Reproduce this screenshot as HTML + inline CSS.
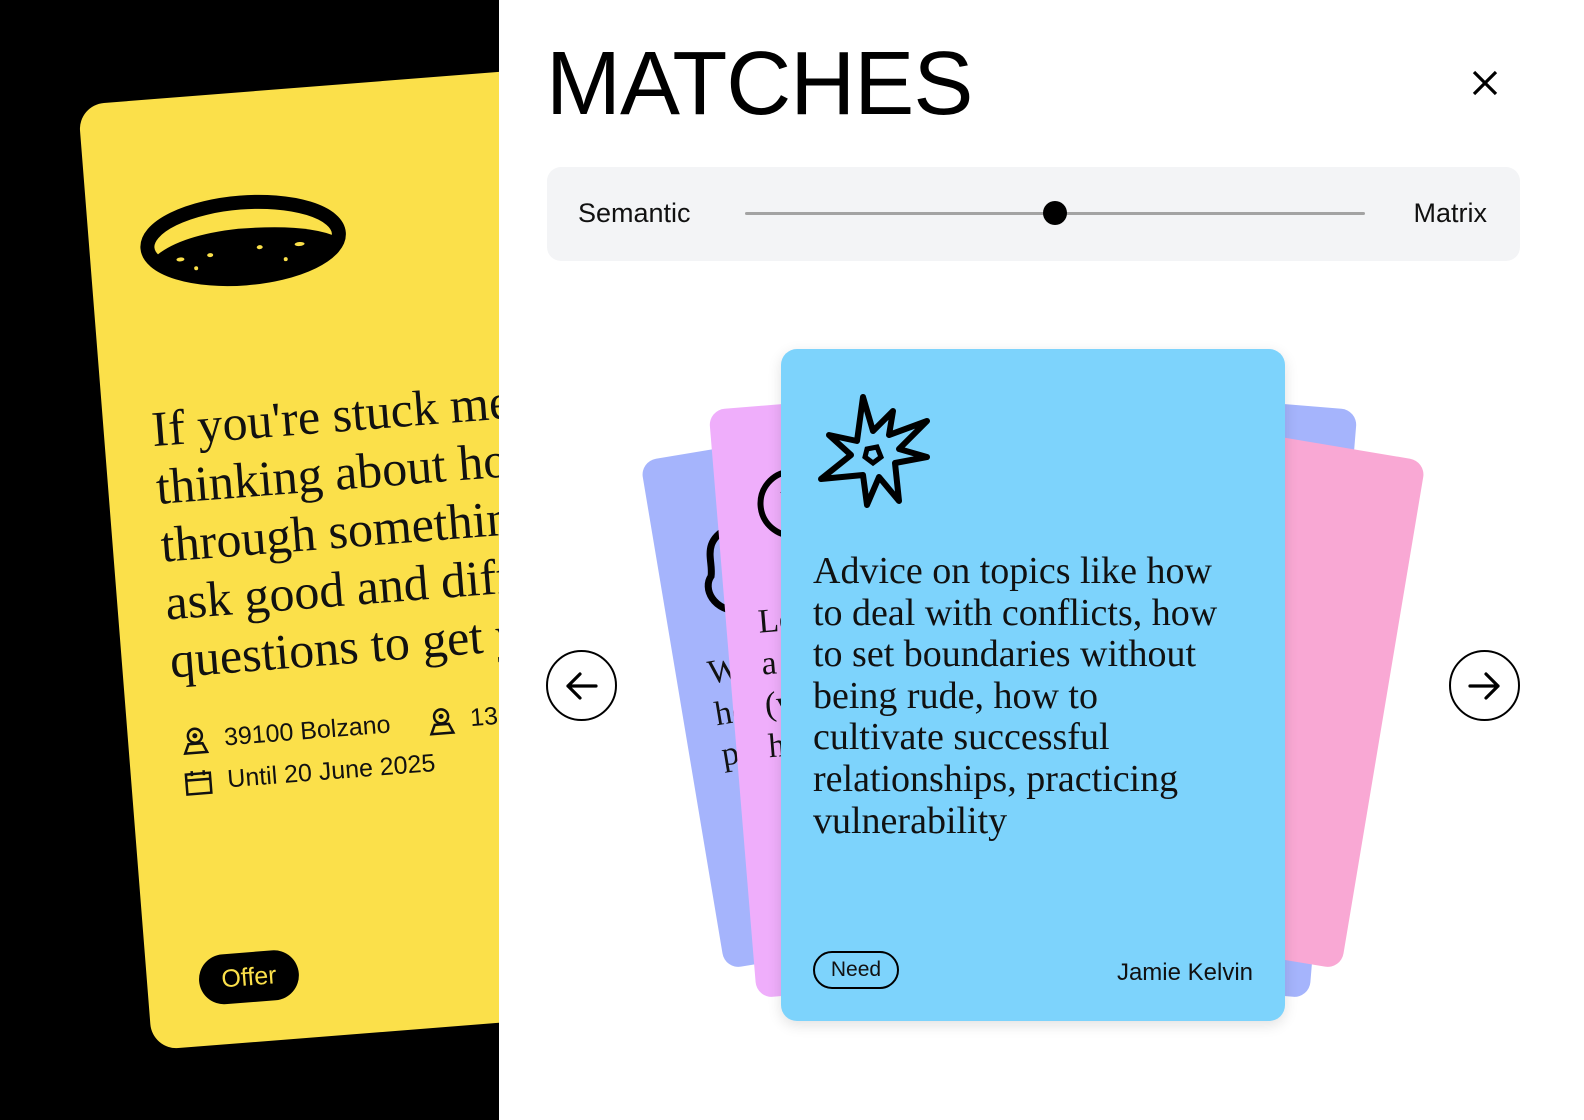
<!DOCTYPE html>
<html><head><meta charset="utf-8"><style>
*{margin:0;padding:0;box-sizing:border-box}
body{width:1584px;height:1120px;position:relative;overflow:hidden;background:#fff;font-family:"Liberation Sans",sans-serif}
.left{position:absolute;left:0;top:0;width:499px;height:1120px;background:#000;overflow:hidden}
.ycard{position:absolute;left:78px;top:105px;width:760px;height:948px;background:#fbe04a;border-radius:26px;transform-origin:0 0;transform:rotate(-4.5deg)}
.ycard .txt{position:absolute;left:48px;top:300px;font-family:"Liberation Serif",serif;font-size:50px;line-height:58px;color:#111;white-space:nowrap}
.ycard .meta{position:absolute;left:52px;font-size:25px;color:#111;white-space:nowrap}
.ycard .offer{position:absolute;left:52px;top:858px;width:100px;height:50px;border-radius:25px;background:#000;color:#fbe04a;font-size:25px;line-height:50px;text-align:center}
h1{position:absolute;left:546px;top:34px;font-size:90px;font-weight:normal;letter-spacing:-1px;color:#000;line-height:100px}
.x{position:absolute;left:1468px;top:66px}
.slider{position:absolute;left:547px;top:167px;width:973px;height:94px;background:#f3f4f6;border-radius:14px}
.slider span{position:absolute;top:31px;font-size:27px;color:#111}
.track{position:absolute;left:198px;top:45px;width:620px;height:3px;background:#a3a3a3;border-radius:2px}
.knob{position:absolute;left:496px;top:34px;width:24px;height:24px;border-radius:50%;background:#000}
.card{position:absolute;border-radius:16px;overflow:hidden}
.card .t{position:absolute;left:32px;top:202px;font-family:"Liberation Serif",serif;font-size:38px;line-height:41.6px;color:#111;white-space:nowrap}
.arrow{position:absolute;top:650px;width:71px;height:71px;border:2px solid #000;border-radius:50%;background:#fff}
</style></head><body>
<div class="left">
 <div class="ycard">
  <svg style="position:absolute;left:50px;top:100px" width="215" height="100" viewBox="0 0 215 100">
   <ellipse cx="104" cy="48" rx="96" ry="38" fill="none" stroke="#000" stroke-width="14"/>
   <path d="M14 58 Q40 38 100 36 Q170 36 198 52 Q180 85 104 88 Q40 86 14 58Z" fill="#000"/>
   <g fill="#fbe04a"><ellipse cx="40" cy="62" rx="4" ry="2"/><ellipse cx="70" cy="60" rx="3" ry="2"/><ellipse cx="120" cy="56" rx="3" ry="2"/><ellipse cx="160" cy="56" rx="5" ry="2"/><ellipse cx="55" cy="72" rx="2" ry="2"/><ellipse cx="145" cy="70" rx="2" ry="2"/></g>
  </svg>
  <div class="txt">If you're stuck mentally<br>thinking about how to go<br>through something, I can<br>ask good and different<br>questions to get you going</div>
  <div class="meta" style="top:628px"><svg width="30" height="30" viewBox="0 0 30 30" style="vertical-align:middle;margin-right:14px"><circle cx="15" cy="10" r="7" fill="none" stroke="#111" stroke-width="2.5"/><circle cx="15" cy="10" r="2.5" fill="#111"/><path d="M4 27 L8 18 L22 18 L26 27Z" fill="none" stroke="#111" stroke-width="2.5"/></svg>39100 Bolzano<span style="margin-left:36px"><svg width="30" height="30" viewBox="0 0 30 30" style="vertical-align:middle;margin-right:14px"><circle cx="15" cy="10" r="7" fill="none" stroke="#111" stroke-width="2.5"/><circle cx="15" cy="10" r="2.5" fill="#111"/><path d="M4 27 L8 18 L22 18 L26 27Z" fill="none" stroke="#111" stroke-width="2.5"/></svg>13</span></div>
  <div class="meta" style="top:670px"><svg width="30" height="30" viewBox="0 0 30 30" style="vertical-align:middle;margin-right:14px"><rect x="3" y="6" width="24" height="20" fill="none" stroke="#111" stroke-width="2.5"/><path d="M3 12 H27 M9 3 V8 M21 3 V8" stroke="#111" stroke-width="2.5"/></svg>Until 20 June 2025</div>
  <div class="offer">Offer</div>
 </div>
</div>

<h1>MATCHES</h1>
<svg class="x" width="34" height="34" viewBox="0 0 34 34"><path d="M6 6 L28 28 M28 6 L6 28" stroke="#000" stroke-width="3.2"/></svg>
<div class="slider"><span style="left:31px">Semantic</span><div class="track"></div><div class="knob"></div><span style="right:33px">Matrix</span></div>

<div class="card" style="left:680px;top:426px;width:386px;height:515px;background:#a5b4fc;transform:rotate(-9.5deg)">
 <svg style="position:absolute;left:36px;top:70px" width="60" height="100"><path d="M40 10 C10 20 20 40 15 55 C5 65 10 90 40 95" fill="none" stroke="#000" stroke-width="7"/></svg>
 <div class="t" style="top:200px;font-size:34px">What I can<br>help with is<br>practicing</div></div>
<div class="card" style="left:892px;top:391px;width:442px;height:590px;background:#a5b4fc;transform:rotate(4.7deg)"><div class="t" style="left:400px;top:340px;font-size:34px">e</div></div>
<div class="card" style="left:1000px;top:426px;width:386px;height:515px;background:#f9a8d4;transform:rotate(9.5deg)"></div>
<div class="card" style="left:732px;top:391px;width:442px;height:590px;background:#efaefb;transform:rotate(-4.7deg)">
 <svg style="position:absolute;left:36px;top:60px" width="80" height="80"><circle cx="40" cy="40" r="32" fill="none" stroke="#000" stroke-width="6"/><path d="M30 30 Q40 25 42 38 Q35 45 44 52" fill="none" stroke="#000" stroke-width="5"/></svg>
 <div class="t" style="top:195px;font-size:34px">Le<br>a<br>(v<br>h</div></div>

<div class="card" style="left:781px;top:349px;width:504px;height:672px;background:#7dd3fc;box-shadow:0 4px 14px rgba(0,0,0,.12)">
 <svg style="position:absolute;left:34px;top:42px" width="120" height="125" viewBox="0 0 120 125">
  <path d="M48 6 L58 40 L78 20 L74 44 L112 30 L84 58 L112 66 L80 72 L84 110 L64 86 L52 114 L48 84 L6 88 L36 64 L14 44 L42 50Z" fill="none" stroke="#000" stroke-width="6" stroke-linejoin="round"/>
  <path d="M52 58 L62 56 L66 66 L58 72 L50 66Z" fill="none" stroke="#000" stroke-width="5"/>
 </svg>
 <div class="t">Advice on topics like how<br>to deal with conflicts, how<br>to set boundaries without<br>being rude, how to<br>cultivate successful<br>relationships, practicing<br>vulnerability</div>
 <div style="position:absolute;left:32px;top:602px;width:86px;height:38px;border:2px solid #000;border-radius:19px;font-size:21px;line-height:34px;text-align:center;color:#111">Need</div>
 <div style="position:absolute;right:32px;top:610px;font-size:24px;color:#111">Jamie Kelvin</div>
</div>

<div class="arrow" style="left:546px"><svg width="67" height="67" viewBox="0 0 67 67"><path d="M48 34 H20 M32 22 L20 34 L32 46" fill="none" stroke="#000" stroke-width="3.2" stroke-linecap="round" stroke-linejoin="round"/></svg></div>
<div class="arrow" style="left:1449px"><svg width="67" height="67" viewBox="0 0 67 67"><path d="M19 34 H47 M35 22 L47 34 L35 46" fill="none" stroke="#000" stroke-width="3.2" stroke-linecap="round" stroke-linejoin="round"/></svg></div>
</body></html>
